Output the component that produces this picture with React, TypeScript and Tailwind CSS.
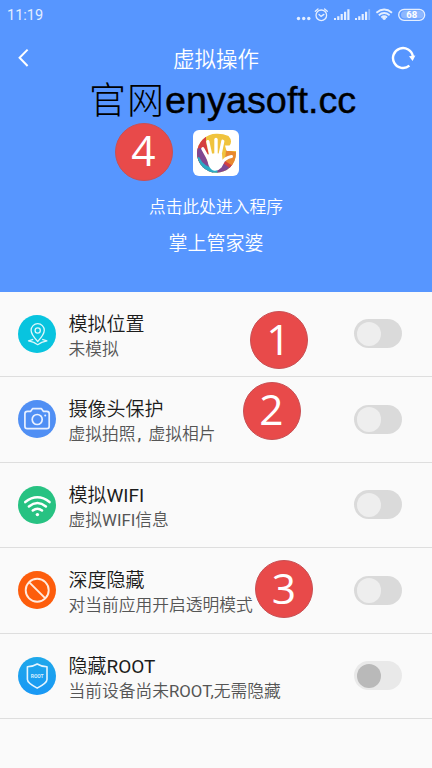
import React from 'react';

function StatusBar() {
  return (
    <div className="flex h-[30px] items-center justify-between pr-[6px] pl-[7px] text-[#e4eeff]">
      <span className="pt-[1px] text-[14.5px] leading-[30px]">11:19</span>
      <svg width="132" height="30" viewBox="0 0 132 30" fill="none">
        <g fill="currentColor">
          <circle cx="4.5" cy="18.5" r="1.7" />
          <circle cx="9.7" cy="18.5" r="1.7" />
          <circle cx="14.8" cy="18.5" r="1.7" />
          <path d="M40 18h2v2h-2zM43.2 16.3h2.200V20h-2.200zM46.6 14h2.200v6h-2.200zM50 11.7h2.200V20H50zM53.3 9.2h2.200V20h-2.200z" />
          <path d="M61 18h2v2h-2zM64.2 16.3h2.200V20h-2.200zM67.6 14h2.200v6h-2.200zM71 11.7h2.200V20H71z" />
          <path d="M74.3 9.2h1.8V20h-1.8z" opacity=".4" />
          <circle cx="90.2" cy="18.3" r="1.7" />
        </g>
        <g stroke="currentColor" strokeWidth="1.3" strokeLinecap="round">
          <circle cx="27.3" cy="15.3" r="5.3" />
          <path d="m25 14.5 2.1 1.9 2.8-2M21.3 11.3l2.7-2.3M33.3 11.3l-2.7-2.3" />
        </g>
        <g stroke="currentColor" strokeWidth="1.8">
          <path d="M82.4 12.7q7.800-6.400 15.600 0M84.800 15.200q5.400-4.400 10.800 0M87.3 17.5q2.9-2.4 5.8 0" />
        </g>
        <rect x="104.7" y="9.5" width="26" height="10.8" rx="5.4" stroke="currentColor" strokeWidth="1.3" />
        <path d="M107 14.8a3.7 3.7 0 0 1 3.7-3.8H126a3.8 3.8 0 0 1 0 7.6h-15.3A3.7 3.7 0 0 1 107 14.8" fill="#fff" opacity=".32" />
        <text x="117.8" y="18.3" textAnchor="middle" fontFamily="Roboto, sans-serif" fontWeight="700" fontSize="9.5" fill="#fff">68</text>
      </svg>
    </div>
  );
}

function NavBar() {
  return (
    <div className="flex h-[56px] items-center justify-between pr-[15px] pl-[15px]">
      <svg width="26" height="30" viewBox="0 0 26 30" fill="none" stroke="#fff" strokeWidth="2">
        <path d="m12.6 6.6-8 8.2 8 8.2" />
      </svg>
      <h1 className="pt-[3px] text-[21.5px] leading-[30px] font-[350]">虚拟操作</h1>
      <svg width="26" height="30" viewBox="0 0 26 30" fill="none">
        <path d="M18.400 22.700A10 10 0 1 1 21.900 13.500" stroke="#fff" strokeWidth="2.4" />
        <path d="m18 13.200 6.400-.8-2.800 5.600z" fill="#fff" />
      </svg>
    </div>
  );
}

function AppLogo() {
  return (
    <svg width="46" height="46" viewBox="0 0 46 46">
      <defs>
        <clipPath id="disc">
          <path d="M35.500 6Q30 3.500 23.500 3.700A19.500 19.500 0 1 0 43 23.500V21h-9.500l-1.500-5.500h4.500q3.500-4.500-1-9.500" />
        </clipPath>
      </defs>
      <rect width="46" height="46" rx="6" fill="#fff" />
      <g clipPath="url(#disc)">
        <path d="M0 0h46v46H0z" fill="#f0c33d" />
        <path d="M13 0v12l3 14L0 42V0z" fill="#d44040" />
        <path d="m0 19 8-1 13 26H0z" fill="#7f4791" />
        <path d="m0 28 6-1q6 12 18 11l2 8H0z" fill="#2baac5" />
        <path d="m24 46 1-10 8-8 8 10-7 10z" fill="#7f4791" />
        <path d="m30 33 5-3 6 4-3 5z" fill="#d44040" />
        <path d="m33 20 13 3v10l-6 3-8-5z" fill="#e78831" />
      </g>
      <g stroke="#fff" strokeLinecap="round" fill="none">
        <path d="M15.500 29 9.800 18.700" strokeWidth="3.200" />
        <path d="m18 26-3.200-14.500" strokeWidth="3.200" />
        <path d="M23 25V9.500" strokeWidth="3.400" />
        <path d="m27 25 2.800-13.800" strokeWidth="3.200" />
        <path d="M28 34q4-6.400 10.500-7.400" strokeWidth="3" />
      </g>
      <path d="M13 25q8-3 16-1l.5 6 2 2-3 5.500q-3 3.500-7 3.200-4-.5-6-5.700z" fill="#fff" />
    </svg>
  );
}

function LocationIcon() {
  return (
    <svg width="38" height="38" viewBox="0 0 38 38" fill="none" stroke="#dff8fb" strokeWidth="1.3" strokeLinejoin="round">
      <circle cx="19" cy="19" r="19" fill="#08c4df" stroke="none" />
      <path d="M19.7 26.5q-6.6-7-6.6-11.2a6.6 6.6 0 0 1 13.2 0q0 4.200-6.600 11.200Z" />
      <circle cx="19.700" cy="15.500" r="2.600" />
      <path d="m15.200 24.300-4.700 1.600 5.200 1.500 4 2.300 4-2.300 5.200-1.500-4.700-1.600" />
    </svg>
  );
}

function CameraIcon() {
  return (
    <svg width="38" height="38" viewBox="0 0 38 38" fill="none" stroke="#e9f1ff" strokeWidth="1.7" strokeLinejoin="round">
      <circle cx="19" cy="19" r="19" fill="#508ff4" stroke="none" />
      <path d="M9.300 11.400h3.200l2-2.700h9l2 2.700h3.300q2.400 0 2.400 2.400v12.400q0 2.400-2.400 2.400H9.300q-2.400 0-2.400-2.400V13.800q0-2.400 2.400-2.400Z" />
      <circle cx="19.200" cy="19.500" r="5" />
      <circle cx="27.200" cy="15.400" r="1" fill="#e9f1ff" stroke="none" />
    </svg>
  );
}

function WifiIcon() {
  return (
    <svg width="38" height="38" viewBox="0 0 38 38" fill="none" stroke="#fff" strokeWidth="2.5" strokeLinecap="round">
      <circle cx="19" cy="19" r="19" fill="#27c282" stroke="none" />
      <path d="M7.300 16.100q12.100-9.600 24.200 0M10.900 20.400q8.500-6.800 17 0M14.800 24.500q4.600-3.600 9.200 0" />
      <circle cx="19.400" cy="28.600" r="1.700" fill="#fff" stroke="none" />
    </svg>
  );
}

function ForbiddenIcon() {
  return (
    <svg width="38" height="38" viewBox="0 0 38 38" fill="none" stroke="#ffebe0" strokeWidth="1.900">
      <circle cx="19" cy="19" r="19" fill="#fd5d0c" stroke="none" />
      <circle cx="19.200" cy="19.300" r="11.500" />
      <path d="m11.300 11.400 16 16" />
    </svg>
  );
}

function RootIcon() {
  return (
    <svg width="38" height="38" viewBox="0 0 38 38" fill="none">
      <defs>
        <linearGradient id="rootFill" x1="0" y1="0" x2="0" y2="1">
          <stop stopColor="#1ea8ea" />
          <stop offset="1" stopColor="#1998f5" />
        </linearGradient>
      </defs>
      <circle cx="19" cy="19" r="19" fill="url(#rootFill)" />
      <path d="M19.200 7q4.700 2.800 9.800 2.800v12.700q0 3.500-9.800 8.600-9.800-5.100-9.800-8.600V9.800q5.100 0 9.800-2.800Z" stroke="#e5f5ff" strokeWidth="1.600" strokeLinejoin="round" />
      <text x="19.200" y="20.900" textAnchor="middle" fontFamily="Roboto, sans-serif" fontWeight="700" fontSize="5" fill="#d5eeff">ROOT</text>
    </svg>
  );
}

function Toggle({ dimmed = false }: { dimmed?: boolean }) {
  return (
    <span className={`flex h-[29px] w-[48px] items-center rounded-full pl-[2.500px] ${dimmed ? 'bg-[#e9e9e9]' : 'bg-[#dadada]'}`}>
      <span className={`size-[24.500px] rounded-full ${dimmed ? 'bg-[#b9b9b9]' : 'bg-[#eeeeee]'}`} />
    </span>
  );
}

function StepBadge({ value, className }: { value: number; className: string }) {
  return (
    <span className={`absolute flex size-[58px] items-center justify-center rounded-full border border-[#c85054] bg-[#e84a4a] pb-[2px] font-['Open_Sans',sans-serif] text-[42.5px] leading-none text-white ${className}`}>
      {value}
    </span>
  );
}

function Latin({ children }: { children: React.ReactNode }) {
  return <span className="font-normal">{children}</span>;
}

type Row = { id: string; title: React.ReactNode; detail: React.ReactNode; icon: React.ReactNode; dimmed?: boolean };

const rows: Row[] = [
  { id: 'location', title: '模拟位置', detail: '未模拟', icon: <LocationIcon /> },
  {
    id: 'camera',
    title: '摄像头保护',
    detail: <>虚拟拍照<span className="inline-block w-[13px] pl-[2px] font-medium">,</span>虚拟相片</>,
    icon: <CameraIcon />,
  },
  { id: 'wifi', title: <>模拟<Latin>WIFI</Latin></>, detail: <>虚拟<Latin>WIFI</Latin>信息</>, icon: <WifiIcon /> },
  { id: 'hide', title: '深度隐藏', detail: '对当前应用开启透明模式', icon: <ForbiddenIcon /> },
  {
    id: 'root',
    title: <>隐藏<Latin>ROOT</Latin></>,
    detail: <>当前设备尚未<Latin>ROOT,</Latin>无需隐藏</>,
    icon: <RootIcon />,
    dimmed: true,
  },
];

export default function App() {
  return (
    <div className="relative h-[768px] w-[432px] overflow-hidden bg-[#fafafa] font-[Roboto,'Noto_Sans_CJK_SC',sans-serif]">
      <header className="flex h-[291.500px] flex-col bg-[#5796ff] text-white">
        <StatusBar />
        <NavBar />
        <div className="flex flex-col items-center pt-[43.500px]">
          <AppLogo />
          <p className="mt-[19.500px] text-[16.750px] leading-[24px] font-[350]">点击此处进入程序</p>
          <p className="mt-[12px] text-[19px] leading-[26px] font-[350]">掌上管家婆</p>
        </div>
      </header>

      <main>
        {rows.map((row) => (
          <section key={row.id} className="flex h-[85.500px] items-center border-b border-[#dedede] pr-[30px] pl-[18px]">
            {row.icon}
            <div className="ml-[12.500px] flex-1 pt-[4px] whitespace-nowrap">
              <h2 className="text-[19px] leading-[26px] font-[350] text-[#1c1c1c]">{row.title}</h2>
              <p className="text-[16.750px] leading-[22px] font-[350] text-[#555555]">{row.detail}</p>
            </div>
            <Toggle dimmed={row.dimmed} />
          </section>
        ))}
      </main>

      <div className="absolute top-[72px] left-[89px] flex h-[50px] items-baseline leading-[50px] whitespace-nowrap text-black">
        <span className="relative top-[1px] w-[76px] font-['Noto_Sans_CJK_SC',sans-serif] text-[37px] font-light tracking-[1px]">官网</span>
        <span className="font-['Liberation_Sans',sans-serif] text-[37.800px] [-webkit-text-stroke:0.4px_black]">enyasoft.cc</span>
      </div>
      <StepBadge value={4} className="top-[122.500px] left-[114.500px]" />
      <StepBadge value={1} className="top-[311px] left-[249.500px]" />
      <StepBadge value={2} className="top-[381.500px] left-[242.500px]" />
      <StepBadge value={3} className="top-[560px] left-[255px]" />
    </div>
  );
}
